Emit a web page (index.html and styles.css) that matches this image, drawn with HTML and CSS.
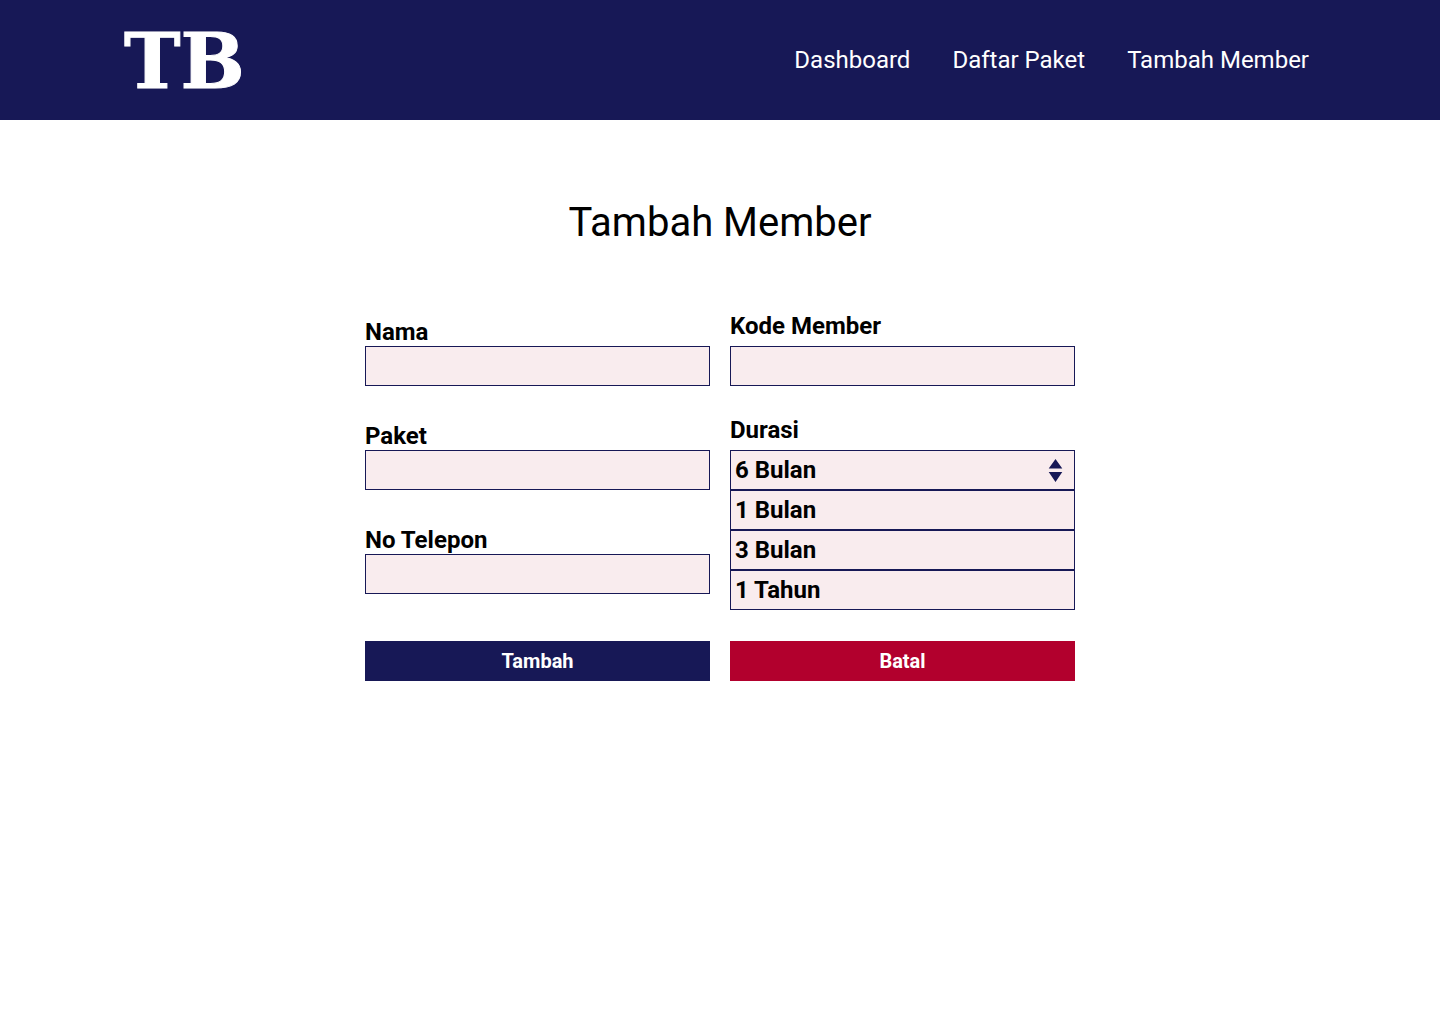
FILE: index.html
```html
<!DOCTYPE html>
<html lang="id">
<head>
  <meta charset="utf-8">
  <meta name="viewport" content="width=device-width, initial-scale=1">
  <title>Tambah Member</title>
  <link rel="stylesheet" href="styles.css">
</head>
<body>
  <header class="header">
    <a class="logo" href="#">TB</a>
    <nav class="nav">
      <a class="nav-link" href="#">Dashboard</a>
      <a class="nav-link" href="#">Daftar Paket</a>
      <a class="nav-link" href="#">Tambah Member</a>
    </nav>
  </header>

  <main class="main">
    <h1 class="title">Tambah Member</h1>
    <form class="form">
      <div class="fields">
        <div class="column">
          <div class="field">
            <label class="label" for="nama">Nama</label>
            <input class="control" id="nama" type="text">
          </div>
          <div class="field">
            <label class="label" for="paket">Paket</label>
            <input class="control" id="paket" type="text">
          </div>
          <div class="field">
            <label class="label" for="telepon">No Telepon</label>
            <input class="control" id="telepon" type="tel">
          </div>
        </div>
        <div class="column column-spaced">
          <div class="field">
            <label class="label" for="kode">Kode Member</label>
            <input class="control" id="kode" type="text">
          </div>
          <div class="field">
            <label class="label" for="durasi">Durasi</label>
            <div class="dropdown">
              <select class="control" id="durasi">
                <option selected>6 Bulan</option>
                <option>1 Bulan</option>
                <option>3 Bulan</option>
                <option>1 Tahun</option>
              </select>
              <svg class="dropdown-icon" width="14" height="24" viewBox="0 0 14 24" aria-hidden="true">
                <path d="M6.5 1 13.3 10.6H-.3ZM-.3 14h13.6L6.5 24Z"/>
              </svg>
              <div class="menu">
                <button class="control menu-item" type="button">1 Bulan</button>
                <button class="control menu-item" type="button">3 Bulan</button>
                <button class="control menu-item" type="button">1 Tahun</button>
              </div>
            </div>
          </div>
        </div>
      </div>
      <div class="actions">
        <button class="button" type="submit">Tambah</button>
        <button class="button button-cancel" type="reset">Batal</button>
      </div>
    </form>
  </main>
</body>
</html>
```
FILE: styles.css
```css
:root {
  --navy: #171856;
  --red: #b2002d;
  --pink: #f9ecee;
}

* {
  box-sizing: border-box;
}

body {
  margin: 0;
  background: #fff;
  color: #000;
  font-family: Roboto, sans-serif;
}

.header {
  display: flex;
  flex-wrap: wrap;
  align-items: center;
  justify-content: space-between;
  min-height: 120px;
  padding: 0 131px 0 124px;
  background: var(--navy);
}

.logo {
  padding-top: 4px;
  color: #fff;
  font: bold 76px/112px "DejaVu Serif", serif;
  text-decoration: none;
  -webkit-text-stroke: 1px #fff;
}

.nav {
  display: flex;
  flex-wrap: wrap;
  gap: 42px;
}

.nav-link {
  color: #fff;
  font-size: 24px;
  line-height: 28px;
  text-decoration: none;
}

.main {
  max-width: 710px;
  margin: 0 auto;
  padding: 79px 0;
}

.title {
  margin: 0 0 65px;
  font-size: 40px;
  font-weight: 400;
  line-height: 48px;
  text-align: center;
}

.fields,
.actions {
  display: grid;
  grid-template-columns: 1fr 1fr;
  gap: 20px;
}

.column {
  display: flex;
  flex-direction: column;
  gap: 36px;
  padding-top: 6px;
}

.column-spaced {
  gap: 30px;
  padding-top: 0;
}

.field {
  display: flex;
  flex-direction: column;
}

.column-spaced .field {
  gap: 6px;
}

.label {
  font-size: 24px;
  font-weight: 700;
  line-height: 28px;
}

.control {
  width: 100%;
  height: 40px;
  margin: 0;
  padding: 0 4px;
  border: 1px solid var(--navy);
  border-radius: 0;
  background: var(--pink);
  color: #000;
  font: 700 24px/28px Roboto, sans-serif;
  text-align: left;
  appearance: none;
}

.dropdown {
  position: relative;
  display: flex;
}

.dropdown-icon {
  position: absolute;
  top: 8px;
  right: 12px;
  overflow: visible;
  fill: var(--navy);
  pointer-events: none;
}

.menu {
  position: absolute;
  top: 100%;
  left: 0;
  right: 0;
  display: flex;
  flex-direction: column;
}

.actions {
  margin-top: 47px;
}

.button {
  height: 40px;
  padding: 0;
  border: 0;
  background: var(--navy);
  color: #fff;
  font: 700 20px/24px Roboto, sans-serif;
}

.button-cancel {
  background: var(--red);
}
```
